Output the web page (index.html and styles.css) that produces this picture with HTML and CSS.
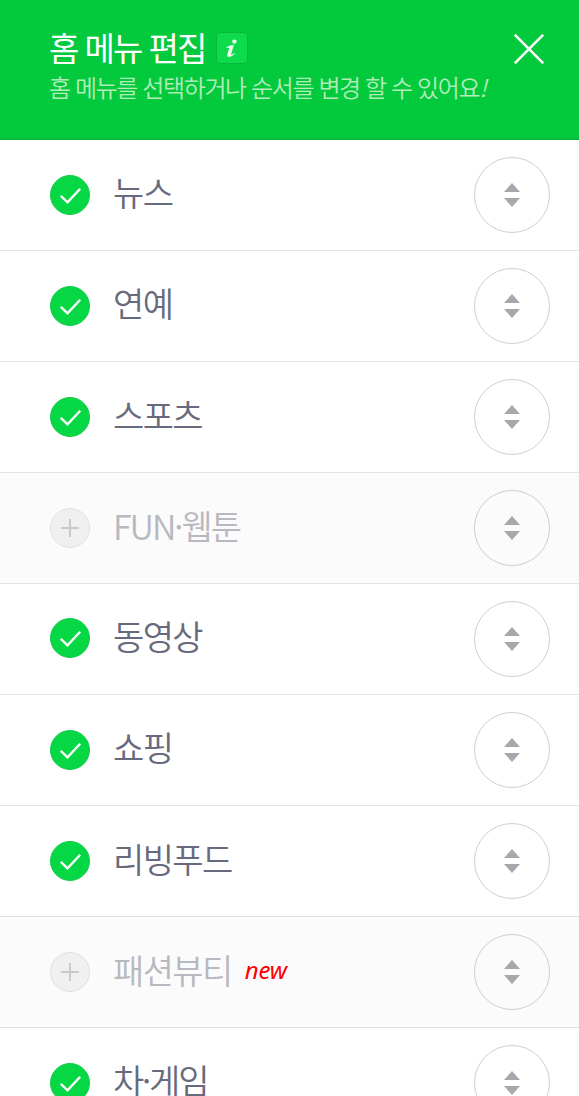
FILE: index.html
```
<!DOCTYPE html>
<html lang="ko">
<head>
<meta charset="utf-8">
<title>홈 메뉴 편집</title>
<link rel="stylesheet" href="styles.css">
</head>
<body>
<svg class="defs" width="0" height="0">
  <symbol id="check" viewBox="0 0 40 40"><circle cx="20" cy="20" r="19.5" fill="#05d844" stroke="#16cb48"/><path d="M10.8 20.8 17.5 27.3 30.2 13.7" fill="none" stroke="#fff" stroke-width="2.4"/></symbol>
  <symbol id="plus" viewBox="0 0 40 40"><circle cx="20" cy="20" r="19.5" fill="#f0f0f0" stroke="#e0e0e0"/><path d="M11 20H29M20 11V29" stroke="#c9c9c9" stroke-width="2"/></symbol>
  <symbol id="sort" viewBox="0 0 16 24"><path d="M8 0 16 9H0ZM0 15H16L8 24Z" fill="#a7a8ad"/></symbol>
</svg>
<header class="header">
  <div class="heading">
    <div class="title-line">
      <h1 class="title">홈 메뉴 편집</h1>
      <svg class="info" viewBox="0 0 32 32"><rect x=".5" y=".5" width="31" height="31" rx="3" fill="#0ddb4b" stroke="#08b93b"/><circle cx="18.4" cy="9.6" r="2.2" fill="#effff1"/><path d="M10.4 15Q14 13 17.9 13L15 22.4Q15 23.4 18.6 20.9L19 21.6Q15.8 25.2 13 25Q10.4 24.7 11.3 21.9L13.4 15.8Q13.3 15 10.8 16Z" fill="#effff1"/></svg>
    </div>
    <p class="subtitle">홈 메뉴를 선택하거나 순서를 변경 할 수 있어요<i>!</i></p>
  </div>
  <svg class="close" viewBox="0 0 30 30"><path d="M.8.8 29.2 29.2M29.2.8.8 29.2" stroke="#fff" stroke-width="2.6"/></svg>
</header>
<ul class="menu">
  <li class="item"><svg class="mark"><use href="#check"/></svg><span class="label">뉴스</span><span class="handle"><svg class="arrows"><use href="#sort"/></svg></span></li>
  <li class="item"><svg class="mark"><use href="#check"/></svg><span class="label">연예</span><span class="handle"><svg class="arrows"><use href="#sort"/></svg></span></li>
  <li class="item"><svg class="mark"><use href="#check"/></svg><span class="label low">스포츠</span><span class="handle"><svg class="arrows"><use href="#sort"/></svg></span></li>
  <li class="item off"><svg class="mark"><use href="#plus"/></svg><span class="label low latin">FUN·웹툰</span><span class="handle"><svg class="arrows"><use href="#sort"/></svg></span></li>
  <li class="item"><svg class="mark raised"><use href="#check"/></svg><span class="label">동영상</span><span class="handle"><svg class="arrows"><use href="#sort"/></svg></span></li>
  <li class="item"><svg class="mark"><use href="#check"/></svg><span class="label">쇼핑</span><span class="handle"><svg class="arrows"><use href="#sort"/></svg></span></li>
  <li class="item"><svg class="mark"><use href="#check"/></svg><span class="label low">리빙푸드</span><span class="handle"><svg class="arrows"><use href="#sort"/></svg></span></li>
  <li class="item off"><svg class="mark"><use href="#plus"/></svg><span class="label low">패션뷰티</span><em class="new">new</em><span class="handle"><svg class="arrows"><use href="#sort"/></svg></span></li>
  <li class="item"><svg class="mark"><use href="#check"/></svg><span class="label dotted">차·게임</span><span class="handle"><svg class="arrows"><use href="#sort"/></svg></span></li>
</ul>
</body>
</html>
```
FILE: styles.css
```
* { box-sizing: border-box; }
html, body { height: 100%; }
body {
  margin: 0;
  overflow: hidden;
  background: #fff;
  font-family: "Noto Sans CJK KR", sans-serif;
}
.defs { display: none; }
.header {
  display: flex;
  justify-content: space-between;
  height: 140px;
  padding: 27px 35px 0 49px;
  background: #03c93c;
  border-bottom: 2px solid #08b93d;
}
.title-line { display: flex; align-items: center; height: 42px; gap: 11px; }
.title {
  margin: -2px 0 0;
  color: #fff;
  font-size: 33px;
  font-weight: 400;
  line-height: 42px;
  letter-spacing: -2px;
  white-space: nowrap;
}
.info { width: 32px; height: 32px; }
.subtitle {
  margin: 2px 0 0;
  color: #b0edb9;
  font-size: 24px;
  font-weight: 350;
  line-height: 32px;
  letter-spacing: -1.4px;
  white-space: nowrap;
}
.close { flex: none; width: 30px; height: 30px; margin-top: 7px; }
.menu { margin: 0; padding: 0; list-style: none; }
.item {
  display: flex;
  align-items: center;
  height: 111px;
  padding: 0 29px 0 50px;
  border-bottom: 1px solid #e2e2e2;
}
.off { background: #fbfbfb; }
.mark { flex: none; width: 40px; height: 40px; }
.raised { margin-bottom: 2px; }
.label {
  margin: -6px 0 0 23px;
  color: #666a7c;
  font-size: 34px;
  font-weight: 350;
  line-height: 50px;
  letter-spacing: -1.6px;
  white-space: nowrap;
}
.low { margin-top: -4px; }
.off .label { color: #b8b8c0; }
.latin { letter-spacing: -2px; }
.dotted { letter-spacing: -2.2px; }
.new {
  margin: -4px 0 0 13px;
  color: #f00;
  font: italic 24px/30px "Noto Sans", sans-serif;
  letter-spacing: -.2px;
}
.handle {
  display: flex;
  flex: none;
  align-items: center;
  justify-content: center;
  width: 76px;
  height: 76px;
  margin-left: auto;
  border: 1px solid #cfcfd0;
  border-radius: 50%;
}
.arrows { width: 16px; height: 24px; }
```
